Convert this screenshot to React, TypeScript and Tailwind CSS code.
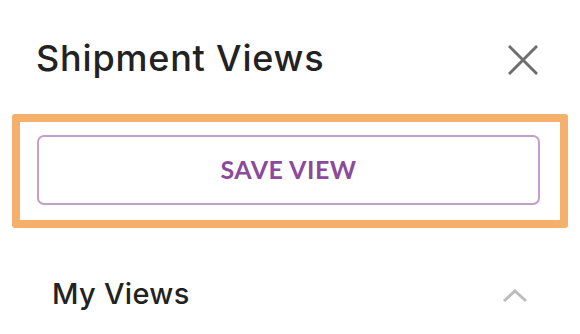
import React from 'react';

const App = () => {
  return (
    <div className="w-[580px] h-[334px] bg-white overflow-hidden" style={{ fontFamily: 'Lato, "Noto Sans", sans-serif' }}>
      <div className="flex items-center justify-between pl-[36px] pr-[40px] pt-[36px] h-[98px]">
        <h2 className="text-[36px] leading-none font-medium tracking-[0.8px] text-[#222222] -mt-[18px] font-['Inter',sans-serif]">Shipment Views</h2>
        <button className="w-[34px] h-[34px] flex items-center justify-center -mt-[14px]">
          <svg width="30" height="30" viewBox="0 0 30 30" fill="none">
            <path d="M2 2 L28 28 M28 2 L2 28" stroke="#6f6f6f" strokeWidth="3" strokeLinecap="square" />
          </svg>
        </button>
      </div>
      <div className="mx-[12px] mt-[16px] h-[114px] border-[8px] border-[#f5b06b] rounded-[3px] pl-[17px] pr-[20px] pt-[13px]">
        <button className="w-full h-[70px] border-2 border-[#c3a0cc] rounded-[7px] text-[25px] font-bold tracking-[0.5px] text-[#8b4a9c]">
          SAVE VIEW
        </button>
      </div>
      <div className="flex items-center justify-between pl-[52px] pr-[52px] mt-[51px]">
        <span className="text-[29px] leading-none font-medium tracking-[0.3px] text-[#222222] font-['Inter',sans-serif]">My Views</span>
        <svg width="26" height="16" viewBox="0 0 26 16" fill="none" className="mt-[4px]">
          <path d="M2 13 L13 3 L24 13" stroke="#bdbdbd" strokeWidth="3" />
        </svg>
      </div>
    </div>
  );
};

export default App;
